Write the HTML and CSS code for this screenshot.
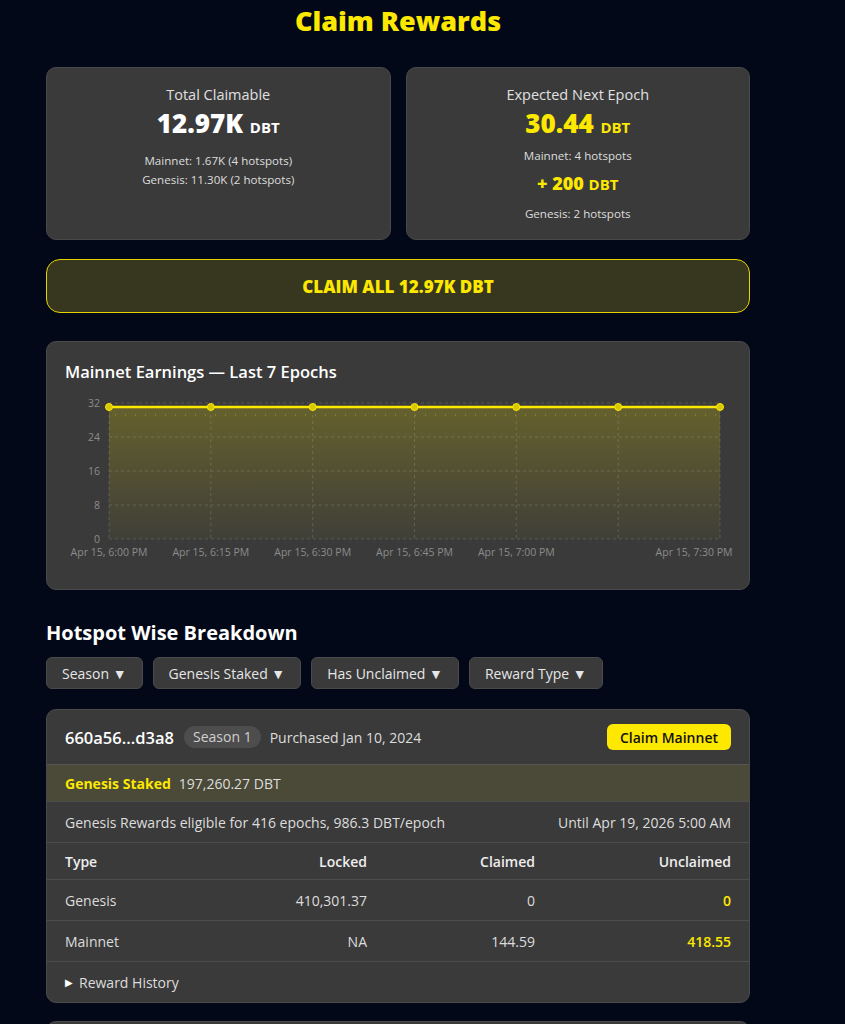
FILE: index.html
```html
<!DOCTYPE html>
<html lang="en">
<head>
<meta charset="utf-8">
<title>Claim Rewards</title>
<link rel="stylesheet" href="styles.css">
</head>
<body>
<main class="page">
  <h1 class="title">Claim Rewards</h1>

  <section class="summary">
    <div class="card stat">
      <div class="stat-label">Total Claimable</div>
      <div class="stat-big">12.97K <span class="unit">DBT</span></div>
      <div class="stat-sub first">Mainnet: 1.67K (4 hotspots)</div>
      <div class="stat-sub">Genesis: 11.30K (2 hotspots)</div>
    </div>
    <div class="card stat">
      <div class="stat-label">Expected Next Epoch</div>
      <div class="stat-big yellow">30.44 <span class="unit">DBT</span></div>
      <div class="stat-note">Mainnet: 4 hotspots</div>
      <div class="stat-mid yellow">+ 200 <span class="unit">DBT</span></div>
      <div class="stat-note last">Genesis: 2 hotspots</div>
    </div>
  </section>

  <button class="claim-all">CLAIM ALL 12.97K DBT</button>

  <section class="card chart-card">
    <h2 class="chart-title">Mainnet Earnings — Last 7 Epochs</h2>
    <svg class="chart" width="666" height="170" viewBox="0 0 666 170">
      <defs>
        <linearGradient id="fill" x1="0" y1="0" x2="0" y2="1">
          <stop offset="0" stop-color="#fde800" stop-opacity="0.22"/>
          <stop offset="1" stop-color="#fde800" stop-opacity="0.03"/>
        </linearGradient>
      </defs>
      <g class="grid">
        <line x1="44" y1="10" x2="655" y2="10"/>
        <line x1="44" y1="44" x2="655" y2="44"/>
        <line x1="44" y1="78" x2="655" y2="78"/>
        <line x1="44" y1="112" x2="655" y2="112"/>
        <line x1="44" y1="146" x2="655" y2="146"/>
        <line x1="44" y1="10" x2="44" y2="146"/>
        <line x1="145.8" y1="10" x2="145.8" y2="146"/>
        <line x1="247.7" y1="10" x2="247.7" y2="146"/>
        <line x1="349.5" y1="10" x2="349.5" y2="146"/>
        <line x1="451.3" y1="10" x2="451.3" y2="146"/>
        <line x1="553.2" y1="10" x2="553.2" y2="146"/>
        <line x1="655" y1="10" x2="655" y2="146"/>
      </g>
      <line class="dots" x1="50" y1="22" x2="655" y2="22"/>
      <rect x="44" y="14" width="611" height="132" fill="url(#fill)"/>
      <polyline class="line" points="44,14 145.8,14 247.7,14 349.5,14 451.3,14 553.2,14 655,14"/>
      <g class="pts">
        <circle cx="44" cy="14" r="3.5"/>
        <circle cx="145.8" cy="14" r="3.5"/>
        <circle cx="247.7" cy="14" r="3.5"/>
        <circle cx="349.5" cy="14" r="3.5"/>
        <circle cx="451.3" cy="14" r="3.5"/>
        <circle cx="553.2" cy="14" r="3.5"/>
        <circle cx="655" cy="14" r="3.5"/>
      </g>
      <g class="ylab">
        <text x="35" y="14">32</text>
        <text x="35" y="48">24</text>
        <text x="35" y="82">16</text>
        <text x="35" y="116">8</text>
        <text x="35" y="150">0</text>
      </g>
      <g class="xlab">
        <text x="44" y="163">Apr 15, 6:00 PM</text>
        <text x="145.8" y="163">Apr 15, 6:15 PM</text>
        <text x="247.7" y="163">Apr 15, 6:30 PM</text>
        <text x="349.5" y="163">Apr 15, 6:45 PM</text>
        <text x="451.3" y="163">Apr 15, 7:00 PM</text>
        <text x="629" y="163">Apr 15, 7:30 PM</text>
      </g>
    </svg>
  </section>

  <h2 class="section-title">Hotspot Wise Breakdown</h2>
  <div class="filters">
    <button class="filter">Season ▼</button>
    <button class="filter">Genesis Staked ▼</button>
    <button class="filter">Has Unclaimed ▼</button>
    <button class="filter">Reward Type ▼</button>
  </div>

  <article class="card hotspot">
    <header class="hs-head">
      <span class="hs-id">660a56...d3a8</span>
      <span class="badge">Season 1</span>
      <span class="hs-date">Purchased Jan 10, 2024</span>
      <button class="claim-btn">Claim Mainnet</button>
    </header>
    <div class="hs-staked"><span class="staked-label">Genesis Staked</span> 197,260.27 DBT</div>
    <div class="hs-row hs-elig">
      <span>Genesis Rewards eligible for 416 epochs, 986.3 DBT/epoch</span>
      <span>Until Apr 19, 2026 5:00 AM</span>
    </div>
    <div class="hs-row tbl thead">
      <span>Type</span><span class="num">Locked</span><span class="num">Claimed</span><span class="num">Unclaimed</span>
    </div>
    <div class="hs-row tbl">
      <span>Genesis</span><span class="num">410,301.37</span><span class="num">0</span><span class="num yellow strong">0</span>
    </div>
    <div class="hs-row tbl">
      <span>Mainnet</span><span class="num">NA</span><span class="num">144.59</span><span class="num yellow strong">418.55</span>
    </div>
    <div class="hs-row hs-history"><span class="tri">▶</span> Reward History</div>
  </article>

  <article class="card hotspot next">
    <header class="hs-head">
      <span class="hs-id">7b21f0...a91c</span>
      <span class="badge">Season 1</span>
      <span class="hs-date">Purchased Jan 12, 2024</span>
      <button class="claim-btn">Claim Mainnet</button>
    </header>
  </article>
</main>
</body>
</html>
```
FILE: styles.css
```css
* { box-sizing: border-box; }
html, body {
  margin: 0;
  background: #020817;
  color: #e6e6e6;
  font-family: "Open Sans", "Noto Sans", sans-serif;
}
.page {
  width: 704px;
  margin-left: 46px;
  padding-top: 6px;
  padding-bottom: 40px;
}
.title {
  margin: 0;
  text-align: center;
  color: #fde800;
  font-size: 27px;
  line-height: 30px;
  font-weight: 800;
}
.card {
  background: #3a3a3a;
  border: 1px solid #4a4a4a;
  border-radius: 10px;
}
.summary {
  margin-top: 31px;
  display: grid;
  grid-template-columns: 1fr 1fr;
  gap: 15px;
}
.stat {
  padding: 19px 16px 17px;
  text-align: center;
}
.stat-label { font-size: 14.5px; line-height: 16px; color: #e0e0e0; }
.stat-big {
  margin-top: 5px;
  font-size: 26px;
  line-height: 30px;
  font-weight: 800;
  color: #fff;
}
.unit { font-size: 15px; font-weight: 700; }
.yellow { color: #fde800; }
.stat-sub { font-size: 11.6px; line-height: 19px; color: #ddd; }
.stat-sub.first { margin-top: 9px; }
.stat-note { margin-top: 6px; font-size: 11.6px; line-height: 16px; color: #ddd; }
.stat-note.last { margin-top: 10px; }
.stat-mid {
  margin-top: 7px;
  font-size: 18px;
  line-height: 24px;
  font-weight: 800;
}
.stat-mid .unit { font-size: 15px; }
.claim-all {
  display: block;
  width: 100%;
  height: 54px;
  margin-top: 19px;
  background: #37371f;
  border: 1px solid #e6d400;
  border-radius: 14px;
  color: #fde800;
  font-family: inherit;
  font-size: 17px;
  font-weight: 800;
  cursor: pointer;
}
.chart-card {
  margin-top: 28px;
  padding: 19px 18px 26px;
}
.chart-title {
  margin: 0;
  font-size: 16.5px;
  line-height: 22px;
  font-weight: 600;
  color: #fff;
}
.chart { display: block; margin-top: 10px; overflow: visible; }
.grid line { stroke: #575757; stroke-width: 1; stroke-dasharray: 3 3; }
.dots { stroke: #8a8a30; stroke-width: 1; stroke-dasharray: 1 9; }
.line { fill: none; stroke: #fde800; stroke-width: 2.5; }
.pts circle { fill: #d8c800; stroke: #fde800; stroke-width: 1; }
.ylab text { fill: #8c8c8c; font-size: 10.5px; text-anchor: end; font-family: "Open Sans", sans-serif; }
.xlab text { fill: #8c8c8c; font-size: 10.5px; text-anchor: middle; font-family: "Open Sans", sans-serif; }
.section-title {
  margin: 31px 0 0;
  font-size: 20px;
  line-height: 24px;
  font-weight: 700;
  color: #fff;
}
.filters {
  margin-top: 12px;
  display: flex;
  gap: 10px;
}
.filter {
  height: 32px;
  padding: 0 15px;
  background: #3a3a3a;
  border: 1px solid #4a4a4a;
  border-radius: 6px;
  color: #e6e6e6;
  font-family: inherit;
  font-size: 14px;
}
.hotspot { margin-top: 20px; overflow: hidden; }
.hotspot.next { margin-top: 18px; }
.hs-head {
  height: 54px;
  display: flex;
  align-items: center;
  padding: 0 18px;
}
.hs-id { font-size: 16.5px; font-weight: 600; color: #fff; }
.badge {
  margin-left: 10px;
  padding: 0 9px;
  height: 22px;
  line-height: 22px;
  border-radius: 11px;
  background: #4d4d4d;
  font-size: 14px;
  color: #cfcfcf;
}
.hs-date { margin-left: 9px; font-size: 14px; color: #ddd; }
.claim-btn {
  margin-left: auto;
  height: 26px;
  padding: 0 13px;
  background: #fde800;
  border: none;
  border-radius: 6px;
  color: #111;
  font-family: inherit;
  font-size: 14px;
  font-weight: 600;
}
.hs-staked {
  height: 37px;
  display: flex;
  align-items: center;
  gap: 8px;
  padding: 0 18px;
  background: #4b4a38;
  border-top: 1px solid #555;
  font-size: 14px;
  color: #ddd;
}
.staked-label { color: #fde800; font-weight: 700; }
.hs-row {
  display: flex;
  align-items: center;
  padding: 0 18px;
  height: 41px;
  border-top: 1px solid #4d4d4d;
  font-size: 14px;
  color: #ddd;
}
.hs-elig { justify-content: space-between; }
.tbl {
  display: grid;
  grid-template-columns: 134px 168px 168px 196px;
}
.thead { height: 37px; font-weight: 600; color: #eee; }
.num { text-align: right; }
.strong { font-weight: 600; }
.hs-history { gap: 6px; }
.tri { font-size: 10px; color: #fff; }
```
